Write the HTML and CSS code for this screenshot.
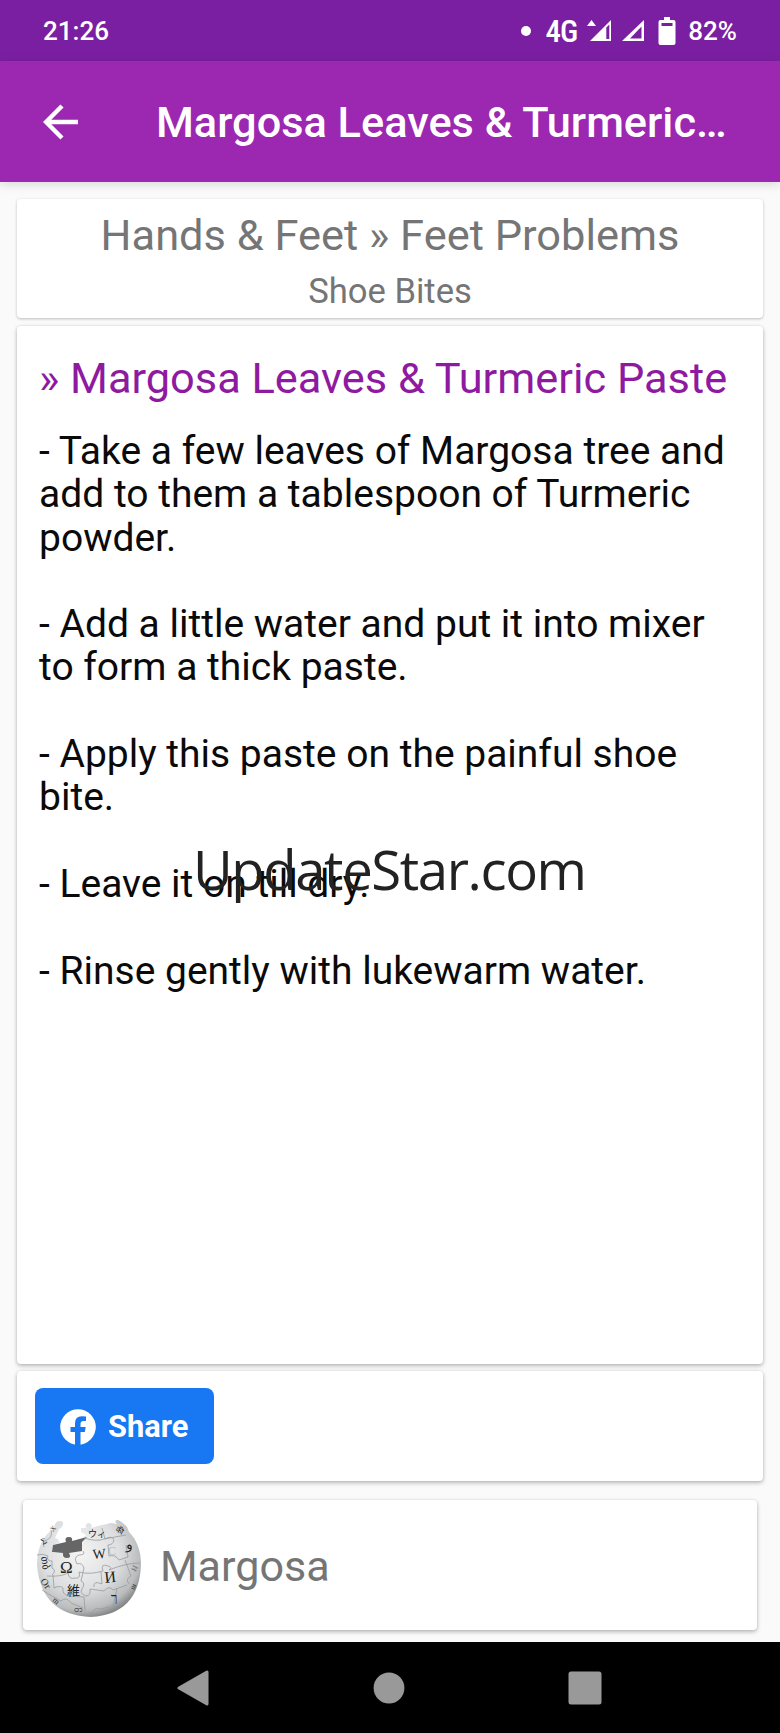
FILE: index.html
```html
<!DOCTYPE html>
<html lang="en">
<head>
    <meta charset="UTF-8">
    <meta name="viewport" content="width=device-width, initial-scale=1.0">
    <title>Margosa Leaves &amp; Turmeric Paste</title>
    <link rel="stylesheet" href="styles.css">
</head>
<body>

    <!-- Status bar -->
    <div class="status-bar">
        <span class="clock">21:26</span>
        <span class="dot"></span>
        <span class="network">4G</span>
        <svg class="signals" width="58" height="24" viewBox="0 0 58 24">
            <path d="M0 7L4.500 1L9 7Z" fill="#fff"/>
            <path d="M24 1V22H3Z" fill="#fff"/>
            <path d="M19.300 8.500L22.300 5.500V20H19.300Z" fill="#7b1fa2"/>
            <path fill-rule="evenodd" d="M57 1V22H35ZM54.500 7.500L43 19.500H54.500Z" fill="#fff"/>
        </svg>
        <svg class="battery" width="18" height="28" viewBox="0 0 18 28">
            <path d="M6 0H12V3H15.500Q17.500 3 17.500 5V26Q17.500 28 15.500 28H2.500Q0.500 28 0.500 26V5Q0.500 3 2.500 3H6Z" fill="#fff"/>
            <path d="M3.500 6H14.500V9H3.500Z" fill="#7b1fa2"/>
        </svg>
        <span class="percent">82%</span>
    </div>

    <!-- Toolbar -->
    <header class="toolbar">
        <svg class="back" width="36" height="36" viewBox="0 0 36 36" fill="none" stroke="#fff" stroke-width="4.400">
            <path d="M35 18H4M19 2L3 18L19 34"/>
        </svg>
        <h1>Margosa Leaves &amp; Turmeric…</h1>
    </header>

    <main class="content">
        <div class="card category">
            <p class="category-name">Hands &amp; Feet » Feet Problems</p>
            <p class="category-sub">Shoe Bites</p>
        </div>

        <div class="card remedy">
            <h2>» Margosa Leaves &amp; Turmeric Paste</h2>
            <p>- Take a few leaves of Margosa tree and<br>add to them a tablespoon of Turmeric<br>powder.</p>
            <p>- Add a little water and put it into mixer<br>to form a thick paste.</p>
            <p>- Apply this paste on the painful shoe<br>bite.</p>
            <p>- Leave it on till dry.</p>
            <p>- Rinse gently with lukewarm water.</p>
            <span class="watermark">UpdateStar.com</span>
        </div>

        <div class="card share">
            <button class="share-button" type="button">
                <svg width="36" height="36" viewBox="0 0 36 36">
                    <circle cx="18" cy="18" r="17.800" fill="#fff"/>
                    <path d="M15 36V23H10.500V18H15V14.200Q15 7.200 21.800 7.200Q24 7.200 26 7.600V12H23.500Q20.500 12 20.500 15V18H25.700L24.800 23H20.500V36Z" fill="#1877f2"/>
                </svg>
                Share
            </button>
        </div>

        <div class="card wiki">
            <svg class="globe" width="108" height="98" viewBox="0 0 108 98">
                <defs>
                    <radialGradient id="ball" cx="42%" cy="35%" r="68%">
                        <stop offset="0" stop-color="#f4f4f4"/>
                        <stop offset="0.550" stop-color="#dedfe0"/>
                        <stop offset="0.850" stop-color="#b9bbbd"/>
                        <stop offset="1" stop-color="#7c7e80"/>
                    </radialGradient>
                </defs>
                <path d="M2 45Q2 20 19 8Q20 1 25 1Q29 1 28 5Q27 8 24 9L20 18Q25 19 24 23L18 25V33H28Q26 38 32 38Q36 37 34 33L47 31V19L51 15L46 12V8H51Q50 3 54 3Q58 4 56 8Q66 5 76 3L82 4Q78 0 83 0Q88 2 92 7L94 12Q106 24 106 45Q104 94 56 97Q6 95 2 45Z" fill="url(#ball)"/>
                <path d="M18 25L31 22Q29 17 34 17Q38 17 37 21L52 17L47 22V31L34 33Q37 38 32 38Q27 38 28 33L17 32Z" fill="#666"/>
                <g fill="none" stroke="#989b9d" stroke-width="0.800">
                    <path d="M2 35Q8 33 13 36Q11 41 17 41V48Q22 51 17 55M12 56Q26 57 33 53Q34 60 40 58Q46 59 44 52Q55 55 68 51Q65 43 73 46Q78 47 74 50Q91 43 105 43"/>
                    <path d="M48 31Q51 35 44 35Q38 37 42 44Q47 42 49 48L46 61Q51 63 47 69Q44 73 51 76Q56 76 55 69L69 71Q74 65 78 70L92 65"/>
                    <path d="M18 55L19 68Q25 65 28 68Q27 74 33 76L49 77L50 91M66 52L67 64Q58 60 59 67M67 8L70 19Q77 15 79 20Q78 25 73 25L74 36Q80 34 84 40L93 37L91 25M82 68L78 87M7 70Q18 77 26 81Q31 76 36 83L48 88"/>
                    <path d="M49 18Q62 22 69 19L91 15M56 95Q59 86 66 89L74 87M90 40L96 56Q90 59 94 64M16 10Q18 17 12 20Q7 20 9 27"/>
                </g>
                <g class="globe-letters" fill="#222">
                    <text x="25" y="53" font-size="17">Ω</text>
                    <text x="58" y="39" font-size="14" transform="rotate(-5 58 39)">W</text>
                    <text x="73" y="35" font-size="12" fill="#bbb">C</text>
                    <text x="70" y="63" font-size="16" transform="rotate(-6 70 63)">И</text>
                    <text x="32" y="75" font-size="13">維</text>
                    <text x="76" y="82" font-size="13">ך</text>
                    <text x="53" y="17" font-size="9">ウィ</text>
                    <text x="80" y="11" font-size="8" transform="rotate(28 80 11)">की</text>
                    <text x="91" y="29" font-size="14">و</text>
                    <text x="8" y="25" font-size="9" transform="rotate(-30 8 25)">Σ</text>
                    <text x="18" y="12" font-size="7" transform="rotate(-45 18 12)">X</text>
                    <text x="6" y="37" font-size="10" transform="rotate(80 6 37)">თბ</text>
                    <text x="5" y="61" font-size="10" transform="rotate(55 5 61)">Or</text>
                    <text x="17" y="81" font-size="8" transform="rotate(38 17 81)">m</text>
                    <text x="39" y="92" font-size="9">ဝာ</text>
                    <text x="101" y="52" font-size="9" fill="#777" transform="rotate(-65 101 52)">អ</text>
                    <text x="99" y="70" font-size="7" transform="rotate(-65 99 70)">ш</text>
                </g>
            </svg>
            <span class="wiki-title">Margosa</span>
        </div>
    </main>

    <!-- Navigation bar -->
    <nav class="nav-bar">
        <svg width="34" height="36" viewBox="0 0 34 36"><path d="M31 2V34L3 18Z" fill="#999" stroke="#999" stroke-width="3" stroke-linejoin="round"/></svg>
        <svg width="32" height="32" viewBox="0 0 32 32"><circle cx="16" cy="16" r="15.400" fill="#999"/></svg>
        <svg width="34" height="34" viewBox="0 0 34 34"><rect x="0.500" y="0.500" width="33" height="33" rx="2.500" fill="#999"/></svg>
    </nav>

</body>
</html>
```
FILE: styles.css
```css
* { margin: 0; padding: 0; box-sizing: border-box; }
body { width: 780px; height: 1733px; display: flex; flex-direction: column; background: #fafafa; font-family: Roboto, sans-serif; overflow: hidden; }

.status-bar { height: 61px; background: #7b1fa2; color: #fff; display: flex; align-items: center; padding: 1px 43px 0; font-size: 26px; font-weight: 500; }
.clock { margin-right: auto; }
.dot { width: 10px; height: 10px; border-radius: 50%; background: #fff; margin-right: 15px; }
.network { font-size: 31px; font-weight: 500; font-stretch: 87%; letter-spacing: -1px; margin-right: 10px; }
.battery { margin: 0 12px 0 13px; }

.toolbar { height: 121px; background: #9c27b0; color: #fff; display: flex; align-items: center; padding-left: 43px; box-shadow: 0 2px 10px rgba(0, 0, 0, 0.15); }
.toolbar h1 { margin-left: 77px; padding-top: 2px; font-size: 43.300px; font-weight: 500; white-space: nowrap; }

.content { height: 1460px; padding: 17px 17px 0; }
.card { background: #fff; border-radius: 4px; box-shadow: 0 2px 4px rgba(0, 0, 0, 0.25), 0 0 3px rgba(0, 0, 0, 0.1); }

.category { height: 119px; text-align: center; color: #757575; padding-top: 11px; box-shadow: 0 1px 3px rgba(0, 0, 0, 0.25); }
.category-name { font-size: 43.400px; line-height: 52px; white-space: nowrap; }
.category-sub { font-size: 34.600px; line-height: 40px; margin-top: 9px; }

.remedy { position: relative; height: 1038px; margin-top: 8px; padding: 28px 22px; }
.remedy h2 { color: #8e1aa0; font-size: 43.350px; font-weight: 400; line-height: 50px; margin-bottom: 26px; white-space: nowrap; }
.remedy p { color: #0a0a0a; font-size: 39px; line-height: 43.300px; margin-bottom: 43.300px; white-space: nowrap; }
.watermark { position: absolute; left: 176px; top: 506px; font-family: "Open Sans", sans-serif; font-size: 54.500px; letter-spacing: -1.400px; color: #222; }

.share { height: 110px; margin-top: 7px; padding: 17px 18px; }
.share-button { width: 179px; height: 76px; border: none; border-radius: 8px; background: #1877f2; color: #fff; display: flex; align-items: center; gap: 12px; padding: 1px 0 0 25px; font-family: Roboto, sans-serif; font-size: 30.800px; font-weight: 700; }

.wiki { height: 130px; margin: 19px 6px 0; display: flex; align-items: center; padding-left: 12px; }
.globe { margin-top: 8px; }
.globe-letters { font-family: "Liberation Serif", "Noto Sans CJK JP", serif; }
.wiki-title { margin-left: 17px; padding-top: 2px; font-size: 43.100px; color: #757575; }

.nav-bar { height: 91px; background: #000; display: flex; align-items: center; justify-content: space-between; padding: 0 178px 0 176px; }
```
